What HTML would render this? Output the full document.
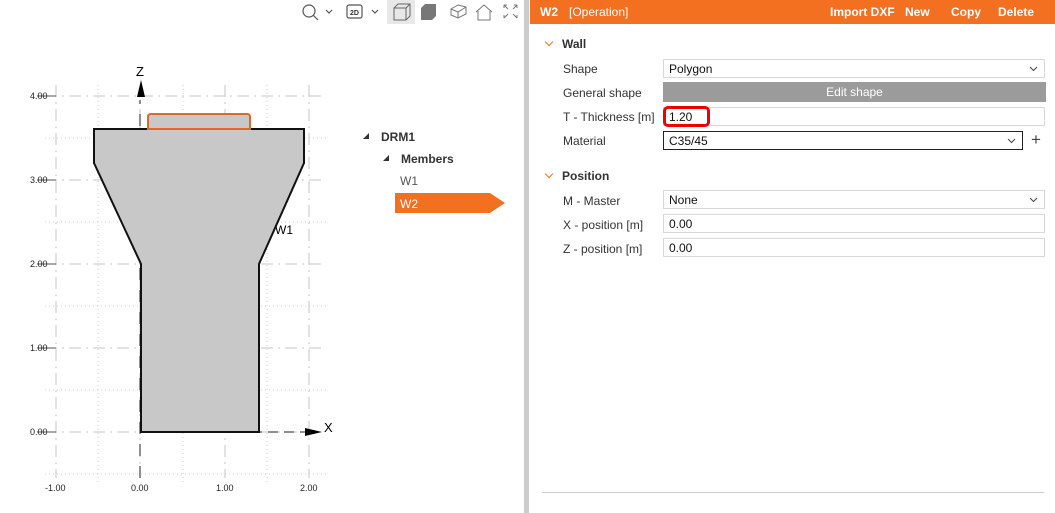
<!DOCTYPE html>
<html><head><meta charset="utf-8"><style>
body{margin:0;width:1055px;height:513px;overflow:hidden;background:#fff;font-family:"Liberation Sans",sans-serif;position:relative}
.a{position:absolute}
.lbl{position:absolute;left:563px;font-size:12px;color:#333}
.inp{position:absolute;left:663px;width:382px;height:19px;border:1px solid #d8d8d8;box-sizing:border-box;font-size:12px;line-height:18px;padding-left:5px;color:#111;background:#fff}
.chev{position:absolute;right:6px;top:6px}
.hd{position:absolute;font-size:12px;font-weight:bold;color:#333}
.hd:before{content:"";position:absolute;left:-16px;top:2px;width:5px;height:5px;border-right:1px solid #f37021;border-bottom:1px solid #f37021;transform:rotate(45deg)}
</style></head><body>
<svg class="a" style="left:0;top:0" width="524" height="513">
<g stroke="#c4c4c4" stroke-width="1" fill="none">
<g stroke-dasharray="12,5,2,5">
<line x1="56" y1="85" x2="56" y2="478"/><line x1="140" y1="85" x2="140" y2="478"/><line x1="225" y1="85" x2="225" y2="478"/><line x1="309" y1="85" x2="309" y2="478"/>
<line x1="45" y1="96" x2="326" y2="96"/><line x1="45" y1="180" x2="326" y2="180"/><line x1="45" y1="264" x2="326" y2="264"/><line x1="45" y1="348" x2="326" y2="348"/><line x1="45" y1="432" x2="326" y2="432"/>
</g>
<g stroke-dasharray="1,3" stroke="#ccc">
<line x1="98" y1="85" x2="98" y2="482"/><line x1="183" y1="85" x2="183" y2="482"/><line x1="267" y1="85" x2="267" y2="482"/>
<line x1="45" y1="138" x2="326" y2="138"/><line x1="45" y1="222" x2="326" y2="222"/><line x1="45" y1="306" x2="326" y2="306"/><line x1="45" y1="390" x2="326" y2="390"/><line x1="45" y1="474" x2="326" y2="474"/>
</g></g>
<g stroke="#555" stroke-width="1"><line x1="37" y1="96" x2="56" y2="96"/><line x1="37" y1="180" x2="56" y2="180"/><line x1="37" y1="264" x2="56" y2="264"/><line x1="37" y1="348" x2="56" y2="348"/><line x1="37" y1="432" x2="56" y2="432"/></g>
<line x1="140" y1="432" x2="310" y2="432" stroke="#222" stroke-dasharray="10,6"/>
<line x1="140" y1="478" x2="140" y2="100" stroke="#222" stroke-dasharray="12,10"/>
<polygon points="94,129 304,129 304,163 259,264 259,432 141,432 141,264 94,163" fill="#c8c8c8" stroke="#111" stroke-width="2"/>
<path d="M148,129 L148,117 Q148,114 151,114 L247,114 Q250,114 250,117 L250,129 Z" fill="#c8c8c8" stroke="#e0692a" stroke-width="2"/>
<polygon points="305,428 322,432 305,436" fill="#000"/>
<polygon points="137,97 141,80 145,97" fill="#000"/>
<g font-size="9" fill="#222" font-family="Liberation Sans">
<text x="30" y="99">4.00</text><text x="30" y="183">3.00</text><text x="30" y="267">2.00</text><text x="30" y="351">1.00</text><text x="30" y="435">0.00</text>
<text x="45" y="491">-1.00</text><text x="131" y="491">0.00</text><text x="216" y="491">1.00</text><text x="300" y="491">2.00</text>
</g>
<text x="136" y="76" font-size="13">Z</text><text x="324" y="432" font-size="13">X</text>
<text x="275" y="234" font-size="12">W1</text>
<g stroke="#555" fill="none" stroke-width="1.2">
<circle cx="309" cy="11" r="6"/><line x1="313" y1="15" x2="318" y2="20"/>
<polyline points="326,10 329,13 332,10"/>
<rect x="347" y="5" width="15" height="13" rx="2"/>
<polyline points="372,10 375,13 378,10"/>
</g>
<text x="350" y="15" font-size="7" font-weight="bold" fill="#333">2D</text>
<rect x="387" y="0" width="28" height="24" fill="#e8e8e8"/>
<g stroke="#666" fill="none"><path d="M394,8 L398,4 L410,4 L410,16 L406,20 L394,20 Z M394,8 L406,8 L406,20 M406,8 L410,4"/></g>
<path d="M421,8 L425,4 L436,4 L436,16 L432,20 L421,20 Z" fill="#777"/>
<g stroke="#777" fill="none"><path d="M451,9 L458,5 L466,7 L466,14 L458,18 L451,15 Z M451,9 L458,12 L466,7 M458,12 L458,18"/>
<path d="M476,12 L484,5 L492,12 M478,11 L478,20 L490,20 L490,11"/>
<path d="M504,5 L508,9 M504,5 L504,8 M504,5 L507,5 M517,5 L513,9 M517,5 L517,8 M517,5 L514,5 M504,18 L508,14 M504,18 L504,15 M517,18 L513,14 M517,18 L517,15"/></g>
<polygon points="363,139 369,133 369,139" fill="#333"/>
<polygon points="383,161 389,155 389,161" fill="#333"/>
<text x="381" y="141" font-size="12" font-weight="bold" fill="#333">DRM1</text>
<text x="401" y="163" font-size="12" font-weight="bold" fill="#333">Members</text>
<text x="400" y="185" font-size="12" fill="#555">W1</text>
<polygon points="395,193 490,193 505,203 490,213 395,213" fill="#f37021"/>
<text x="400" y="208" font-size="12" fill="#fff">W2</text>
</svg>
<div class="a" style="left:524px;top:0;width:5px;height:513px;background:#ccc"></div>
<div class="a" style="left:530px;top:0;width:525px;height:24px;background:#f37021;color:#fff;font-size:12px;line-height:24px">
<span class="a" style="left:10px;font-weight:bold">W2</span><span class="a" style="left:39px">[Operation]</span>
<span class="a" style="left:300px;font-weight:bold">Import DXF</span><span class="a" style="left:375px;font-weight:bold">New</span><span class="a" style="left:421px;font-weight:bold">Copy</span><span class="a" style="left:468px;font-weight:bold">Delete</span></div>
<div class="hd" style="left:562px;top:37px">Wall</div>
<div class="lbl" style="top:62px">Shape</div><div class="inp" style="top:59px">Polygon<svg class="chev" width="9" height="6"><polyline points="1,1 4.5,4.5 8,1" fill="none" stroke="#444"/></svg></div>
<div class="lbl" style="top:86px">General shape</div><div class="a" style="left:663px;top:82px;width:383px;height:20px;background:#9b9b9b;color:#fff;font-size:12px;line-height:20px;text-align:center">Edit shape</div>
<div class="lbl" style="top:110px">T - Thickness [m]</div><div class="inp" style="top:107px">1.20</div>
<div class="a" style="left:663px;top:106px;width:47px;height:21px;border:3px solid #e00;border-radius:5px;box-sizing:border-box"></div>
<div class="lbl" style="top:134px">Material</div><div class="inp" style="top:131px;width:360px;border-color:#222">C35/45<svg class="chev" width="9" height="6"><polyline points="1,1 4.5,4.5 8,1" fill="none" stroke="#444"/></svg></div>
<div class="a" style="left:1031px;top:131px;font-size:17px;color:#444;line-height:17px">+</div>
<div class="hd" style="left:562px;top:169px">Position</div>
<div class="lbl" style="top:194px">M - Master</div><div class="inp" style="top:190px">None<svg class="chev" width="9" height="6"><polyline points="1,1 4.5,4.5 8,1" fill="none" stroke="#444"/></svg></div>
<div class="lbl" style="top:218px">X - position [m]</div><div class="inp" style="top:214px">0.00</div>
<div class="lbl" style="top:242px">Z - position [m]</div><div class="inp" style="top:238px">0.00</div>
<div class="a" style="left:542px;top:492px;width:502px;height:1px;background:#ccc"></div>
</body></html>
